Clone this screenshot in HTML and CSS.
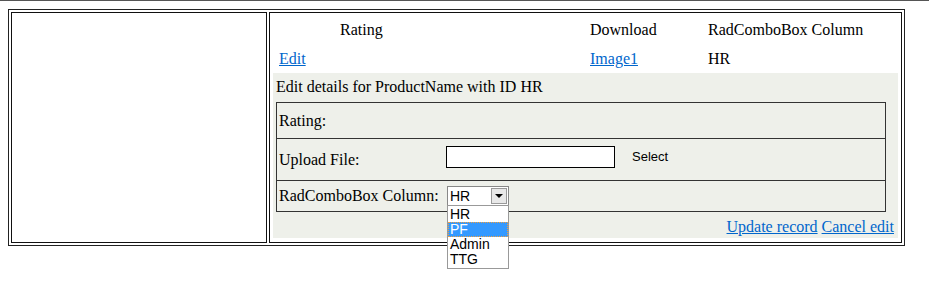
FILE: index.html
```html
<!DOCTYPE html>
<html lang="en">
<head>
  <meta charset="UTF-8" />
  <title>RadGrid edit form</title>
  <link rel="stylesheet" href="styles.css">
</head>
<body>
  <div class="page">
    <table class="outer">
      <tr>
        <td class="side"></td>
        <td class="main">
          <div class="grid">
            <!-- Заголовки колонок -->
            <div class="row head">
              <div class="cell"></div>
              <div class="cell">Rating</div>
              <div class="cell">Download</div>
              <div class="cell">RadComboBox Column</div>
            </div>

            <div class="row data">
              <div class="cell"><a href="#">Edit</a></div>
              <div class="cell"></div>
              <div class="cell"><a href="#">Image1</a></div>
              <div class="cell">HR</div>
            </div>

            <!-- Форма редактирования -->
            <div class="edit-form">
              <div class="title">Edit details for ProductName with ID HR</div>

              <div class="fields">
                <div class="field rating">
                  <div class="label">Rating:</div>
                  <div class="value"></div>
                </div>
                <div class="field upload">
                  <div class="label">Upload File:</div>
                  <div class="value">
                    <input type="text" class="file-input">
                    <span class="select-btn">Select</span>
                  </div>
                </div>
                <div class="field combo-row">
                  <div class="label">RadComboBox Column:</div>
                  <div class="value">
                    <div class="combo">
                      <span class="combo-text">HR</span>
                      <span class="combo-arrow"></span>
                      <ul class="combo-list">
                        <li>HR</li>
                        <li class="active">PF</li>
                        <li>Admin</li>
                        <li>TTG</li>
                      </ul>
                    </div>
                  </div>
                </div>
              </div>

              <div class="actions">
                <a href="#">Update record</a> <a href="#">Cancel edit</a>
              </div>
            </div>
          </div>
        </td>
      </tr>
    </table>
  </div>
</body>
</html>
```

FILE: styles.css
```css
* {
  box-sizing: border-box;
}

body {
  margin: 0;
  border-top: 1px solid #555;
  font-family: "Liberation Serif", "Times New Roman", serif;
  font-size: 16px;
  color: #000;
  background: #fff;
}

a {
  color: #0066cc;
}

.page {
  padding: 8px 8px 50px;
}

.outer {
  width: 897px;
  height: 237px;
  border: 1px solid #222;
  border-spacing: 2px;
}

.outer td {
  border: 1px solid #111;
  padding: 0;
  vertical-align: top;
}

.side {
  width: 256px;
}

.grid {
  padding: 3px;
}

.row {
  display: grid;
  grid-template-columns: 61px 250px 118px 1fr;
}

.row .cell {
  padding-left: 6px;
}

.head {
  height: 28px;
  line-height: 28px;
}

.data {
  height: 29px;
  line-height: 29px;
}

.edit-form {
  background: #eef0ea;
  padding: 0 4px 2px 3px;
}

.title {
  padding: 5px 0 6px;
  line-height: 18px;
}

.fields {
  width: 610px;
  border: 1px solid #333;
}

.field {
  display: flex;
  align-items: center;
}

.field + .field {
  border-top: 1px solid #333;
}

.field .label {
  width: 169px;
  padding-left: 2px;
}

.field .value {
  display: flex;
  align-items: center;
}

.rating {
  height: 35px;
}

.upload {
  height: 42px;
}

.combo-row {
  height: 31px;
}

.file-input {
  width: 169px;
  height: 22px;
  margin: 0 0 6px;
  border: 1px solid #000;
  background: #fff;
}

.select-btn {
  margin: 0 0 6px 17px;
  font-family: "Liberation Sans", Arial, sans-serif;
  font-size: 13px;
}

.combo {
  position: relative;
  width: 62px;
  height: 20px;
  margin-left: 1px;
  border: 1px solid #888;
  background: #fff;
  font-family: "Liberation Sans", Arial, sans-serif;
  font-size: 14px;
}

.combo-text {
  display: block;
  padding-left: 2px;
  line-height: 18px;
}

.combo-arrow {
  position: absolute;
  top: 1px;
  right: 1px;
  width: 16px;
  height: 16px;
  border: 1px solid #999;
  background: #e8e8e8;
}

.combo-arrow::after {
  content: "";
  position: absolute;
  top: 5px;
  left: 3px;
  border-left: 4px solid transparent;
  border-right: 4px solid transparent;
  border-top: 4px solid #000;
}

.combo-list {
  position: absolute;
  top: 18px;
  left: -1px;
  width: 62px;
  margin: 0;
  padding: 1px 0;
  list-style: none;
  border: 1px solid #999;
  background: #fff;
  z-index: 2;
}

.combo-list li {
  height: 15px;
  line-height: 15px;
  padding-left: 2px;
}

.combo-list li.active {
  background: #3399ff;
  color: #fff;
  outline: 1px dotted #f0a040;
  outline-offset: -1px;
}

.actions {
  margin-top: 6px;
  text-align: right;
  line-height: 18px;
}
```
